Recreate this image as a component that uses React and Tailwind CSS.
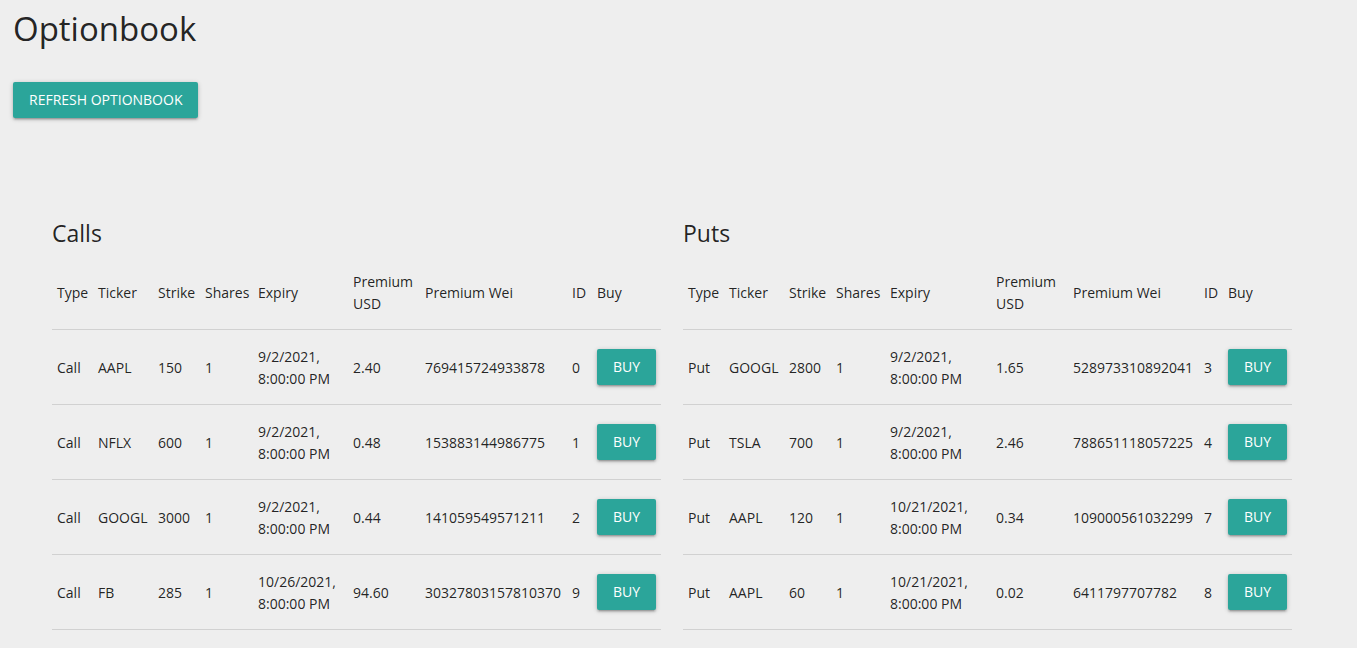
const calls = [
  ["Call", "AAPL", "150", "1", "9/2/2021, 8:00:00 PM", "2.40", "769415724933878", "0"],
  ["Call", "NFLX", "600", "1", "9/2/2021, 8:00:00 PM", "0.48", "153883144986775", "1"],
  ["Call", "GOOGL", "3000", "1", "9/2/2021, 8:00:00 PM", "0.44", "141059549571211", "2"],
  ["Call", "FB", "285", "1", "10/26/2021, 8:00:00 PM", "94.60", "30327803157810370", "9"],
];

const puts = [
  ["Put", "GOOGL", "2800", "1", "9/2/2021, 8:00:00 PM", "1.65", "528973310892041", "3"],
  ["Put", "TSLA", "700", "1", "9/2/2021, 8:00:00 PM", "2.46", "788651118057225", "4"],
  ["Put", "AAPL", "120", "1", "10/21/2021, 8:00:00 PM", "0.34", "109000561032299", "7"],
  ["Put", "AAPL", "60", "1", "10/21/2021, 8:00:00 PM", "0.02", "6411797707782", "8"],
];

const headings = ["Type", "Ticker", "Strike", "Shares", "Expiry", "Premium USD", "Premium Wei", "ID", "Buy"];

const callColumns = ["w-[41px]", "w-[60px]", "w-[47px]", "w-[53px]", "w-[95px]", "w-[72px]", "w-[147px]", "w-[25px]", "w-[69px]"];
const putColumns = ["w-[41px]", "w-[60px]", "w-[47px]", "w-[54px]", "w-[106px]", "w-[77px]", "w-[131px]", "w-[24px]", "w-[69px]"];

function Button({ children, ...props }) {
  return (
    <button
      type="button"
      className="h-9 cursor-pointer rounded-xs bg-[#2ba59a] px-4 text-sm leading-9 font-normal whitespace-nowrap text-white uppercase shadow-[0_2px_2px_0_rgba(0,0,0,0.14),0_3px_1px_-2px_rgba(0,0,0,0.12),0_1px_5px_0_rgba(0,0,0,0.2)] hover:bg-[#2bbbad]"
      {...props}
    >
      {children}
    </button>
  );
}

function OptionTable({ title, rows, columns }) {
  const id = title.toLowerCase();
  return (
    <section className="min-w-0 flex-1">
      <h2 id={id} className="text-[23px] leading-7 font-normal">{title}</h2>
      <table aria-labelledby={id} className="mt-2 w-full table-fixed border-collapse text-left text-sm leading-[22px] font-normal">
        <colgroup>
          {columns.map((width, i) => (
            <col key={i} className={width} />
          ))}
        </colgroup>
        <thead>
          <tr className="border-b border-black/12">
            {headings.map((heading) => (
              <th key={heading} scope="col" className={`px-[5px] pt-4 pb-[14px] font-normal ${heading === "Premium USD" ? "" : "whitespace-nowrap"}`}>
                {heading}
              </th>
            ))}
          </tr>
        </thead>
        <tbody>
          {rows.map((row) => (
            <tr key={row[7]} className="border-b border-black/12">
              {row.map((value, i) => (
                <td key={i} className={`px-[5px] pt-4 pb-[14px] ${i === 4 ? "" : "whitespace-nowrap"}`}>
                  {value}
                </td>
              ))}
              <td className="px-[5px]">
                <Button aria-label={`Buy option ${row[7]}`}>Buy</Button>
              </td>
            </tr>
          ))}
        </tbody>
      </table>
    </section>
  );
}

export default function App() {
  return (
    <div className="min-h-screen bg-[#eeeeee] px-[13px] pt-2 font-['Open_Sans',sans-serif] text-black/87">
      <h1 className="text-[33px] leading-[42px] font-normal">Optionbook</h1>
      <div className="mt-8">
        <Button>Refresh Optionbook</Button>
      </div>
      <main className="mt-[101px] flex gap-[22px] pr-[52px] pl-[39px]">
        <OptionTable title="Calls" rows={calls} columns={callColumns} />
        <OptionTable title="Puts" rows={puts} columns={putColumns} />
      </main>
    </div>
  );
}
